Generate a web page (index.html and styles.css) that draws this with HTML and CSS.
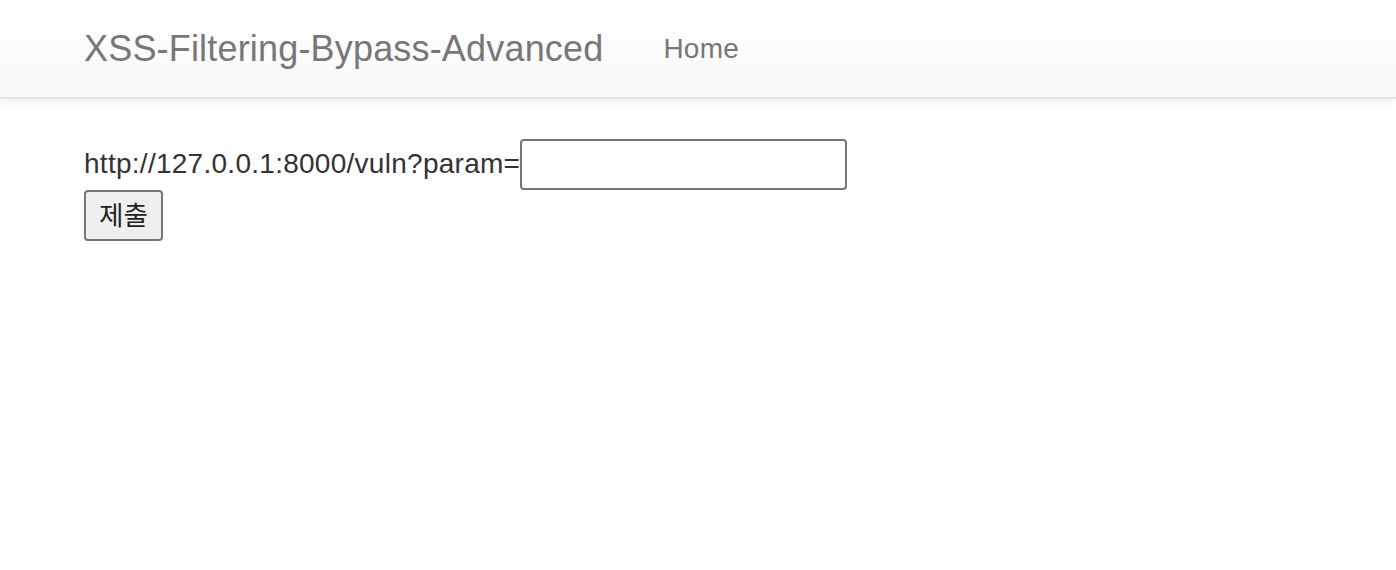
FILE: index.html
```html
<!DOCTYPE html>
<html lang="ko">
<head>
<meta charset="utf-8">
<title>XSS-Filtering-Bypass-Advanced</title>
<link rel="stylesheet" href="styles.css">
</head>
<body>
<nav class="navbar">
  <div class="navbar-inner">
    <a class="brand" href="#">XSS-Filtering-Bypass-Advanced</a>
    <ul class="nav">
      <li><a href="#">Home</a></li>
    </ul>
  </div>
</nav>
<div class="container">
  <form class="vuln-form">
    <div class="url-line">http://127.0.0.1:8000/vuln?param=<input type="text" class="param-input"></div>
    <div class="submit-line"><button type="submit" class="submit-btn">제출</button></div>
  </form>
</div>
</body>
</html>
```
FILE: styles.css
```css
html, body {
  margin: 0;
  padding: 0;
  background: #fff;
}
body {
  font-family: "Liberation Sans", Arial, "Noto Sans CJK KR", sans-serif;
  font-size: 28px;
  line-height: 40px;
  color: #333;
}
a {
  text-decoration: none;
}
.navbar {
  height: 97px;
  border-bottom: 2px solid #e4e4e4;
  background-image: linear-gradient(to bottom, #ffffff 0, #f8f8f8 100%);
  box-shadow: 0 2px 10px rgba(0, 0, 0, 0.075);
  margin-bottom: 40px;
}
.navbar-inner {
  display: flex;
  align-items: flex-start;
  padding-left: 54px;
}
.brand {
  display: block;
  padding: 29px 30px 28px 30px;
  font-size: 36px;
  line-height: 40px;
  letter-spacing: 0.18px;
  color: #777;
}
.nav {
  list-style: none;
  margin: 0;
  padding: 0;
  display: flex;
}
.nav a {
  display: block;
  padding: 29px 30px 28px 30px;
  font-size: 28px;
  line-height: 40px;
  letter-spacing: 0.2px;
  color: #777;
}
.container {
  padding-left: 84px;
}
.vuln-form {
  margin: 0;
}
.url-line {
  letter-spacing: 0.27px;
}
.param-input {
  box-sizing: border-box;
  width: 327px;
  height: 51px;
  margin: 0;
  padding: 2px 4px;
  border: 2px solid #767676;
  border-radius: 4px;
  font-family: "Liberation Sans", Arial, sans-serif;
  font-size: 26.67px;
  letter-spacing: 0;
  background: #fff;
  color: #000;
}
.submit-btn {
  box-sizing: border-box;
  width: 79px;
  height: 51px;
  margin: 0;
  padding: 2px 12px;
  border: 2px solid #767676;
  border-radius: 4px;
  background: #efefef;
  color: #222;
  font-family: "Liberation Sans", Arial, "Noto Sans CJK KR", sans-serif;
  font-size: 26.67px;
  line-height: 40px;
}
```
